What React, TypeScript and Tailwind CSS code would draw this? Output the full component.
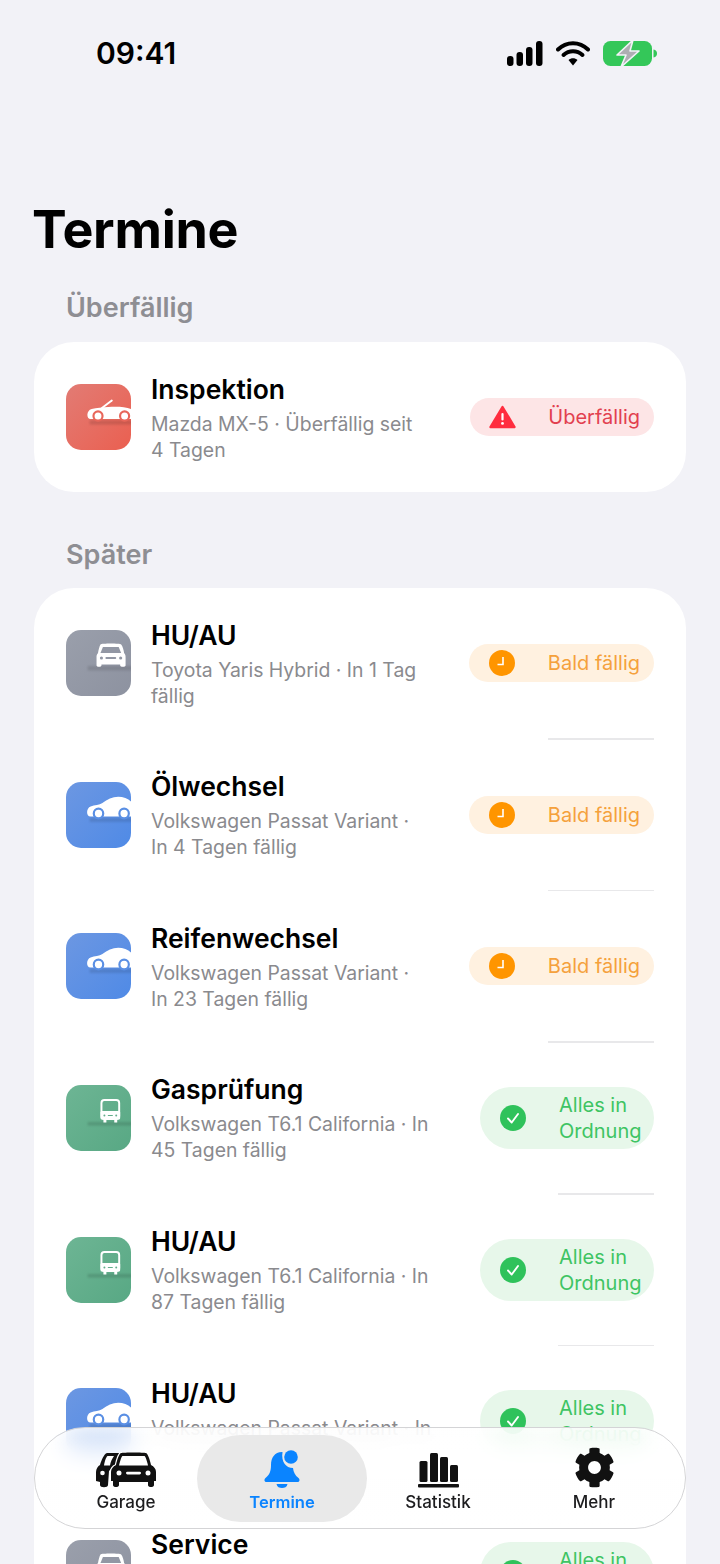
import { FaCog } from "react-icons/fa";

type Kind = "convertible" | "front" | "sedan" | "bus";
type Status = "overdue" | "soon" | "ok";

const rows: { title: string; lines: string[]; kind: Kind; status: Status }[] = [
  { title: "HU/AU", lines: ["Toyota Yaris Hybrid · In 1 Tag", "fällig"], kind: "front", status: "soon" },
  { title: "Ölwechsel", lines: ["Volkswagen Passat Variant ·", "In 4 Tagen fällig"], kind: "sedan", status: "soon" },
  { title: "Reifenwechsel", lines: ["Volkswagen Passat Variant ·", "In 23 Tagen fällig"], kind: "sedan", status: "soon" },
  { title: "Gasprüfung", lines: ["Volkswagen T6.1 California · In", "45 Tagen fällig"], kind: "bus", status: "ok" },
  { title: "HU/AU", lines: ["Volkswagen T6.1 California · In", "87 Tagen fällig"], kind: "bus", status: "ok" },
  { title: "HU/AU", lines: ["Volkswagen Passat Variant · In", ""], kind: "sedan", status: "ok" },
  { title: "Service", lines: ["", ""], kind: "front", status: "ok" },
];

const tileBg: Record<Kind, string> = {
  convertible: "bg-gradient-to-br from-[#e27b74] to-[#ea5f50]",
  front: "bg-gradient-to-br from-[#9a9fab] to-[#8d92a0]",
  sedan: "bg-gradient-to-br from-[#6c97e2] to-[#4f8ae6]",
  bus: "bg-gradient-to-br from-[#6db594] to-[#58a884]",
};

const ringColor: Record<Kind, string> = {
  convertible: "#e8665a",
  front: "#9297a4",
  sedan: "#5a8fe4",
  bus: "#62ad8b",
};

function VehicleTile({ kind }: { kind: Kind }) {
  const ring = ringColor[kind];
  return (
    <div className={`h-[66px] w-[65px] shrink-0 overflow-hidden rounded-[15px] ${tileBg[kind]}`}>
      <svg viewBox="0 0 66 66" preserveAspectRatio="none" className="h-full w-full">
        {kind === "convertible" && (
          <>
            <rect x="24" y="36.5" width="44" height="4" fill="#000" opacity="0.13" className="blur-[1px]" />
            <path d="M36.5 24 L46.5 16.5" stroke="#fff" strokeWidth="2" strokeLinecap="round" />
            <path d="M25 35 C20.5 35 20.5 26.5 26 25 C31 23.5 37 23.5 43 23 C50 22.5 60 22.5 66 25 L66 35 Z" fill="#fff" />
            <circle cx="32.5" cy="32" r="4.6" fill="#fff" stroke={ring} strokeWidth="2.2" />
            <circle cx="59.5" cy="32" r="4.6" fill="#fff" stroke={ring} strokeWidth="2.2" />
          </>
        )}
        {kind === "sedan" && (
          <>
            <rect x="24" y="36" width="44" height="4" fill="#000" opacity="0.11" className="blur-[1px]" />
            <path d="M25 34.5 C20 34.5 20.5 26 25 24.5 C29 23 34 23 37 21 C42 17 47 14.7 53 14.7 C58 14.7 63 16.5 66 19.5 L66 34.5 Z" fill="#fff" />
            <circle cx="33" cy="31.5" r="4.8" fill="#fff" stroke={ring} strokeWidth="2.2" />
            <circle cx="59" cy="31.5" r="4.8" fill="#fff" stroke={ring} strokeWidth="2.2" />
          </>
        )}
        {kind === "front" && (
          <>
            <rect x="22" y="36" width="46" height="4.5" fill="#000" opacity="0.11" className="blur-[1px]" />
            <path d="M35 14.5 C36 13.3 55 13.3 56 14.5 C57.5 16 58.5 20 59 23 C60.5 24.5 60.5 26 60.5 28 L60.5 35.5 C60.5 37.3 55 37.3 55 35.5 L55 34.5 L36 34.5 L36 35.5 C36 37.3 31 37.3 31 35.5 L31 28 C31 26 31 24.5 32.5 23 C33 20 34 16 35 14.5 Z" fill="#fff" />
            <path d="M37.5 17 L53.5 17 L56 23 L35 23 Z" fill={ring} />
            <circle cx="36" cy="28" r="1.6" fill={ring} />
            <circle cx="55.5" cy="28" r="1.6" fill={ring} />
            <rect x="40" y="27" width="11" height="2" rx="1" fill={ring} />
          </>
        )}
        {kind === "bus" && (
          <>
            <rect x="22" y="37" width="46" height="3.5" fill="#000" opacity="0.13" className="blur-[1px]" />
            <rect x="36" y="15" width="18" height="19" rx="3" fill="none" stroke="#fff" strokeWidth="2" />
            <rect x="35" y="26" width="20" height="8.5" rx="1.5" fill="#fff" />
            <rect x="38" y="34" width="3" height="3.5" fill="#fff" />
            <rect x="49" y="34" width="3" height="3.5" fill="#fff" />
            <circle cx="39" cy="30.5" r="1" fill={ring} />
            <circle cx="51" cy="30.5" r="1" fill={ring} />
            <rect x="42.5" y="30" width="5" height="1" fill={ring} />
          </>
        )}
      </svg>
    </div>
  );
}

function StatusBadge({ status }: { status: Status }) {
  if (status === "overdue") {
    return (
      <div className="flex h-[38px] w-[184px] items-center justify-between rounded-full bg-[#fde5e6] pl-[19px] pr-[14px]">
        <svg viewBox="0 0 27 24" className="h-[24px] w-[27px]">
          <path d="M13.5 2 L25.5 22 L1.5 22 Z" fill="#ff2d3f" stroke="#ff2d3f" strokeWidth="2.4" strokeLinejoin="round" />
          <rect x="12.4" y="8" width="2.2" height="7.5" rx="1.1" fill="#fff" />
          <circle cx="13.5" cy="18.4" r="1.4" fill="#fff" />
        </svg>
        <span className="text-[20px] leading-[26px] text-[#e2404f]">Überfällig</span>
      </div>
    );
  }
  if (status === "soon") {
    return (
      <div className="flex h-[38px] w-[185px] items-center justify-between rounded-full bg-[#fff1e0] pl-[20px] pr-[14px]">
        <svg viewBox="0 0 26 26" className="h-[26px] w-[26px]">
          <circle cx="13" cy="13" r="13" fill="#ff9500" />
          <path d="M14 7 L14 14.5 L8.5 14.5" fill="none" stroke="#fff" strokeWidth="1.6" />
        </svg>
        <span className="text-[20px] leading-[26px] text-[#f5a13c]">Bald fällig</span>
      </div>
    );
  }
  return (
    <div className="flex h-[62px] w-[174px] items-center justify-between rounded-full bg-[#e7f7ea] pl-[20px] pr-[14px]">
      <svg viewBox="0 0 26 26" className="h-[26px] w-[26px]">
        <circle cx="13" cy="13" r="13" fill="#2fc25b" />
        <path d="M8 13.5 L11.7 17.5 L18 9" fill="none" stroke="#fff" strokeWidth="1.9" strokeLinecap="round" strokeLinejoin="round" />
      </svg>
      <span className="w-[81px] text-[20px] leading-[26px] text-[#3ec463]">Alles in Ordnung</span>
    </div>
  );
}

function Row({ title, lines, kind, status }: { title: string; lines: string[]; kind: Kind; status: Status }) {
  return (
    <div className="flex h-[150px] items-center pl-[32px] pr-[32px]">
      <VehicleTile kind={kind} />
      <div className="ml-[20px] min-w-0 flex-1">
        <p className="mb-[5px] whitespace-nowrap text-[26.5px] font-semibold leading-[34px] text-black">{title}</p>
        <p className="min-h-[26px] whitespace-nowrap text-[19.4px] leading-[26px] text-[#8a8a8e]">{lines[0]}</p>
        <p className="min-h-[26px] whitespace-nowrap text-[19.4px] leading-[26px] text-[#8a8a8e]">{lines[1]}</p>
      </div>
      <StatusBadge status={status} />
    </div>
  );
}

function SectionHeader({ children }: { children: string }) {
  return <h2 className="pl-[66px] text-[27px] font-semibold leading-[34px] text-[#8e8e93]">{children}</h2>;
}

function StatusBar() {
  return (
    <div className="flex h-[106px] items-start justify-between pl-[96px] pr-[63px] pt-[35px]">
      <span className="text-[30px] font-semibold leading-[36px] text-black">09:41</span>
      <div className="flex items-center gap-[13px] pt-[6px]">
        <svg viewBox="0 0 36 25" className="h-[25px] w-[36px]">
          <rect x="0" y="15" width="6.5" height="10" rx="3" fill="#000" />
          <rect x="9.5" y="11" width="6.5" height="14" rx="3" fill="#000" />
          <rect x="19" y="6" width="6.5" height="19" rx="3" fill="#000" />
          <rect x="29" y="0" width="6.5" height="25" rx="3" fill="#000" />
        </svg>
        <svg viewBox="0 0 34 25" className="h-[25px] w-[34px]">
          <path d="M2 8.5 C10.5 0 23.5 0 32 8.5" fill="none" stroke="#000" strokeWidth="4" strokeLinecap="round" />
          <path d="M7.5 14 C13 9 21 9 26.5 14" fill="none" stroke="#000" strokeWidth="4" strokeLinecap="round" />
          <path d="M12.5 19 L17 24.5 L21.5 19 C19 16.6 15 16.6 12.5 19 Z" fill="#000" />
        </svg>
        <svg viewBox="0 0 54 25" className="h-[25px] w-[54px]">
          <rect x="0" y="0" width="49" height="25" rx="7.5" fill="#34c759" />
          <path d="M50.5 8.5 C53 9 54 10.5 54 12.5 C54 14.5 53 16 50.5 16.5 Z" fill="#34c759" />
          <path d="M30 -1 L14 14 L23 14 L18 26 L36 10 L27 10 Z" fill="#aeaeb2" stroke="#f2f2f7" strokeWidth="1.6" strokeLinejoin="round" />
        </svg>
      </div>
    </div>
  );
}

function GarageIcon() {
  return (
    <svg viewBox="0 0 60 36" className="h-[36px] w-[60px]" fill="#111">
      <path d="M11 1 L26 1 L19 13 L13 19 L12 33 C12 36 4 36 4 33 L4 30 L0 29 L0 20 C0 17 2 14 4 13 C5.5 8 8 2 11 1 Z" />
      <path d="M11.5 4 L18 4 C16 7 14.5 10 14 13.5 L8 13.5 C8.5 10 10 5 11.5 4 Z" fill="#fff" />
      <circle cx="6.5" cy="21" r="2.3" fill="#fff" />
      <path
        d="M25 1 C27 0.3 48 0.3 50 1 C52 2 54 8 55 13 C58 14.5 60 17 60 20 L60 29 L58 29 L58 33 C58 35.8 52 35.8 52 33 L52 30 L23 30 L23 33 C23 35.8 17 35.8 17 33 L17 29 L15 29 L15 20 C15 17 17 14.5 20 13 C21 8 23 2 25 1 Z"
        stroke="#fff"
        strokeWidth="2.4"
        paintOrder="stroke"
      />
      <path d="M26.5 4 L48.5 4 C49.5 4.5 51 9 52 13.5 L23 13.5 C24 9 25.5 4.5 26.5 4 Z" fill="#fff" />
      <circle cx="23" cy="21" r="2.5" fill="#fff" />
      <circle cx="52" cy="21" r="2.5" fill="#fff" />
      <rect x="30" y="19.7" width="15" height="2.8" rx="1.4" fill="#fff" />
    </svg>
  );
}

function BellIcon() {
  return (
    <svg viewBox="0 0 36 39" className="h-[39px] w-[36px]" fill="#0a84ff">
      <path d="M18 3 C10.5 3 7 9 7 16 C7 22 5.5 26 1.5 29 C0 30.2 0 33 2.5 33 L33.5 33 C36 33 36 30.2 34.5 29 C31 26.5 29.5 23 29 19 C22 19 17 13 18.5 3 Z" />
      <path d="M12.5 35 L23.5 35 C23 38 20.5 39 18 39 C15.5 39 13 38 12.5 35 Z" />
      <circle cx="27" cy="8" r="6.8" />
    </svg>
  );
}

function ChartIcon() {
  return (
    <svg viewBox="0 0 41 36" className="h-[36px] w-[41px]" fill="#111">
      <rect x="1.5" y="9" width="8" height="21" rx="1.5" />
      <rect x="12" y="1" width="8" height="29" rx="1.5" />
      <rect x="22" y="5" width="8" height="25" rx="1.5" />
      <rect x="32" y="13" width="8" height="17" rx="1.5" />
      <rect x="0" y="32" width="41" height="3.4" rx="1" />
    </svg>
  );
}

function TabBar() {
  const tabs = [
    { label: "Garage", icon: <GarageIcon />, active: false },
    { label: "Termine", icon: <BellIcon />, active: true },
    { label: "Statistik", icon: <ChartIcon />, active: false },
    { label: "Mehr", icon: <FaCog className="h-[41px] w-[41px] text-[#111]" />, active: false },
  ];
  return (
    <div className="absolute left-[34px] top-[1427px] flex h-[102px] w-[652px] items-center rounded-full border border-[#d4d4d6] bg-gradient-to-b from-white/75 to-white/95 px-[13px] shadow-[inset_0_0_14px_rgba(255,255,255,0.9)] backdrop-blur-md">
      {tabs.map((tab) => (
        <div key={tab.label} className="relative flex h-[87px] w-[156px] flex-col items-center">
          {tab.active && <div className="absolute -left-[7px] -right-[7px] inset-y-0 rounded-full bg-[#e9e9e9]" />}
          <div className="relative flex h-[54px] items-end pb-[1px]">{tab.icon}</div>
          <span
            className={`relative mt-[2px] leading-[22px] ${
              tab.active ? "text-[16.6px] font-semibold text-[#0a84ff]" : "text-[17px] font-medium text-[#1c1c1e]"
            }`}
          >
            {tab.label}
          </span>
        </div>
      ))}
    </div>
  );
}

export default function App() {
  return (
    <div
      className="relative h-[1564px] w-[720px] overflow-hidden bg-[#f2f2f7]"
      style={{ fontFamily: "Inter, 'Noto Sans', sans-serif" }}
    >
      <StatusBar />
      <h1 className="mt-[93px] pl-[32px] text-[52px] font-bold leading-[62px] tracking-[-0.25px] text-black">Termine</h1>

      <div className="mt-[30px]">
        <SectionHeader>Überfällig</SectionHeader>
      </div>
      <div className="mx-[34px] mt-[17px] rounded-[40px] bg-white">
        <Row
          title="Inspektion"
          lines={["Mazda MX-5 · Überfällig seit", "4 Tagen"]}
          kind="convertible"
          status="overdue"
        />
      </div>

      <div className="mt-[46px]">
        <SectionHeader>Später</SectionHeader>
      </div>
      <div className="mx-[34px] mt-[16px] rounded-[40px] bg-white">
        {rows.map((row, i) => (
          <div key={i}>
            <Row {...row} />
            <div className="flex h-[1.67px] justify-end pr-[32px]">
              <div className={`bg-[#e8e8ea] ${row.status === "ok" ? "w-[96px]" : "w-[106px]"}`} />
            </div>
          </div>
        ))}
      </div>

      <TabBar />
    </div>
  );
}
